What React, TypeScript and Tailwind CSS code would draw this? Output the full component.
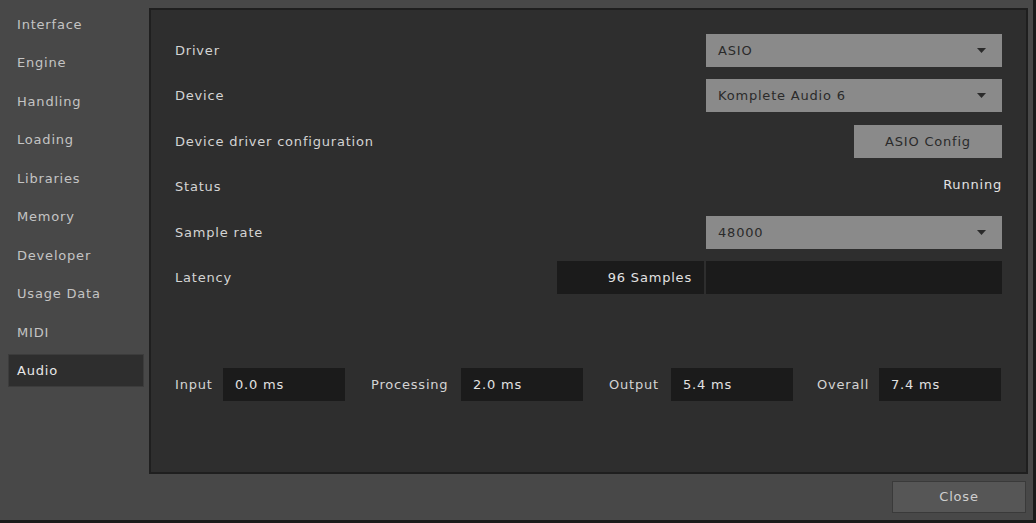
import React from "react";

const font = { fontFamily: '"DejaVu Sans", "Liberation Sans", sans-serif' };

const sideItems = [
  "Interface",
  "Engine",
  "Handling",
  "Loading",
  "Libraries",
  "Memory",
  "Developer",
  "Usage Data",
  "MIDI",
  "Audio",
];

function Arrow() {
  return (
    <svg width="9" height="5" viewBox="0 0 9 5" className="shrink-0">
      <path d="M0 0 H9 L4.5 5 Z" fill="#2a2a2a" />
    </svg>
  );
}

function Dropdown({ value }: { value: string }) {
  return (
    <div className="w-[296px] h-[33px] bg-[#8a8a8a] flex items-center justify-between pl-[12px] pr-[16px] text-[#2a2a2a]">
      <span>{value}</span>
      <Arrow />
    </div>
  );
}

function Row({ label, children, mt }: { label: string; children?: React.ReactNode; mt: string }) {
  return (
    <div className={`h-[33px] flex items-center justify-between ${mt}`}>
      <span className="text-[#d4d4d4]">{label}</span>
      {children}
    </div>
  );
}

function Stat({ label, value, lw, ml }: { label: string; value: string; lw: string; ml: string }) {
  return (
    <div className={`flex items-center ${ml}`}>
      <span className={`text-[#d4d4d4] ${lw}`}>{label}</span>
      <div className="w-[122px] h-[33px] bg-[#1b1b1b] flex items-center pl-[12px] text-[#e2e2e2]">
        {value}
      </div>
    </div>
  );
}

export default function App() {
  return (
    <div
      className="w-[1036px] h-[523px] bg-[#484848] border-r-[3px] border-b-[3px] border-[#1a1a1a] flex text-[13px] tracking-[0.8px] overflow-hidden"
      style={font}
    >
      <div className="w-[149px] shrink-0 pt-[5px] pl-[8px] pr-[5px] flex flex-col">
        {sideItems.map((it) => (
          <div key={it} className="h-[38.5px] flex items-center">
            <div
              className={`w-full h-[33px] flex items-center pl-[8px] border ${
                it === "Audio"
                  ? "bg-[#2e2e2e] border-[#3c3c3c] text-[#e8e8e8]"
                  : "border-transparent text-[#c4c4c4]"
              }`}
            >
              {it}
            </div>
          </div>
        ))}
      </div>
      <div className="flex-1 flex flex-col pt-[8px] pr-[5px]">
        <div className="h-[466px] bg-[#2e2e2e] border-2 border-[#1f1f1f] pl-[24px] pr-[24px] pt-[24px] flex flex-col">
          <Row label="Driver" mt="">
            <Dropdown value="ASIO" />
          </Row>
          <Row label="Device" mt="mt-[12px]">
            <Dropdown value="Komplete Audio 6" />
          </Row>
          <Row label="Device driver configuration" mt="mt-[13px]">
            <div className="w-[148px] h-[33px] bg-[#8a8a8a] flex items-center justify-center text-[#2a2a2a]">
              ASIO Config
            </div>
          </Row>
          <Row label="Status" mt="mt-[12px]">
            <span className="text-[#e2e2e2] -mt-[3px]">Running</span>
          </Row>
          <Row label="Sample rate" mt="mt-[13px]">
            <Dropdown value="48000" />
          </Row>
          <Row label="Latency" mt="mt-[12px]">
            <div className="flex gap-[2px]">
              <div className="w-[147px] h-[33px] bg-[#1b1b1b] flex items-center justify-end pr-[12px] text-[#e2e2e2]">
                96 Samples
              </div>
              <div className="w-[296px] h-[33px] bg-[#1b1b1b]" />
            </div>
          </Row>
          <div className="mt-[74px] h-[33px] flex items-center">
            <Stat label="Input" value="0.0 ms" lw="w-[48px]" ml="" />
            <Stat label="Processing" value="2.0 ms" lw="w-[90px]" ml="ml-[26px]" />
            <Stat label="Output" value="5.4 ms" lw="w-[62px]" ml="ml-[26px]" />
            <Stat label="Overall" value="7.4 ms" lw="w-[62px]" ml="ml-[24px]" />
          </div>
        </div>
        <div className="flex justify-end mt-[7px] pr-[2px]">
          <div className="w-[134px] h-[32px] bg-[#565656] border border-[#3a3a3a] flex items-center justify-center text-[#cfcfcf]">
            Close
          </div>
        </div>
      </div>
    </div>
  );
}
